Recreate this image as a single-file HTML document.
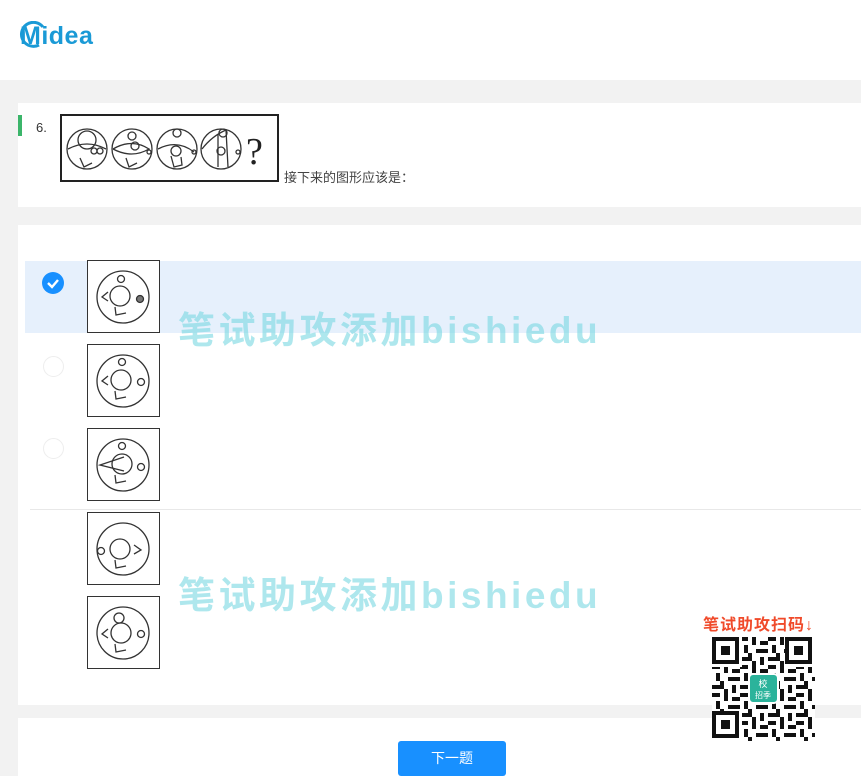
<!DOCTYPE html>
<html><head><meta charset="utf-8"><style>
*{margin:0;padding:0;box-sizing:border-box}
body{width:861px;height:776px;background:#f2f2f2;font-family:"Liberation Sans","Noto Sans CJK SC",sans-serif;position:relative;overflow:hidden}
.hdr{position:absolute;left:0;top:0;width:861px;height:80px;background:#fff}
.logo{position:absolute;left:20px;top:22px;font-size:25px;font-weight:bold;color:#1a9ad6;letter-spacing:0.5px}
.card{position:absolute;background:#fff}
.bar{position:absolute;left:18px;top:115px;width:4px;height:21px;background:#3bb56a}
.box{position:absolute;width:73px;height:73px;border:1.5px solid #333;background:#fff}
.radio{position:absolute;left:43px;width:21px;height:21px;border-radius:50%;border:1px solid #ddd;background:#fff}
.wm{position:absolute;font-size:37px;font-weight:bold;color:rgba(120,215,225,0.6);letter-spacing:3.5px}
</style></head><body>
<div class="hdr"><div class="logo">Midea</div>
<svg style="position:absolute;left:17px;top:21px" width="30" height="28"><path d="M26 6 A12 12 0 1 0 22 24" fill="none" stroke="#1a9ad6" stroke-width="3"/></svg></div>
<div class="card" style="left:18px;top:103px;width:843px;height:104px"></div>
<div class="bar"></div>
<div style="position:absolute;left:36px;top:120px;font-size:13px;color:#333">6.</div>
<svg style="position:absolute;left:60px;top:114px" width="220" height="69">
<rect x="1" y="1" width="217" height="66" fill="#fff" stroke="#222" stroke-width="2"/>
<g fill="none" stroke="#333" stroke-width="1.3">
<circle cx="27" cy="35" r="20"/><circle cx="27" cy="26" r="9"/><path d="M8 35 Q27 25 46 35"/><circle cx="34" cy="37" r="3"/><circle cx="40" cy="37" r="3"/><path d="M20 44 l4 9 l8 -4"/>
<circle cx="72" cy="35" r="20"/><circle cx="72" cy="22" r="4"/><path d="M53 35 Q72 24 89 35 Q72 45 53 35"/><circle cx="75" cy="32" r="4"/><circle cx="89" cy="38" r="2"/><path d="M66 44 l3 9 l8 -4"/>
<circle cx="117" cy="35" r="20"/><circle cx="117" cy="19" r="4"/><path d="M98 35 Q117 25 134 38"/><circle cx="116" cy="37" r="5"/><circle cx="134" cy="38" r="2"/><path d="M111 42 l3 11 l8 -2 l-1 -8"/>
<circle cx="161" cy="35" r="20"/><circle cx="163" cy="19" r="4"/><path d="M142 35 Q152 22 166 16 L168 53"/><circle cx="161" cy="37" r="4"/><circle cx="178" cy="38" r="2"/><path d="M158 20 L158 53"/>
</g>
<text x="186" y="50" font-size="38" font-family="Liberation Serif" fill="#222">?</text>
</svg>
<div style="position:absolute;left:284px;top:167px;font-size:13px;color:#444">接下来的图形应该是：</div>
<div class="card" style="left:18px;top:225px;width:843px;height:480px"></div>
<div style="position:absolute;left:25px;top:261px;width:836px;height:72px;background:#e6f0fc"></div>
<div style="position:absolute;left:30px;top:509px;width:831px;height:1px;background:#e8e8e8"></div>
<div style="position:absolute;left:42px;top:272px;width:22px;height:22px;border-radius:50%;background:#1890ff"><svg width="22" height="22"><path d="M6 11 l4 4 l6 -7" fill="none" stroke="#fff" stroke-width="2.4"/></svg></div>
<div class="radio" style="top:356px;opacity:.5"></div>
<div class="radio" style="top:438px;opacity:.5"></div>

<div class="box" style="left:87px;top:260px"><svg width="70" height="70"><g fill="none" stroke="#333" stroke-width="1.3"><circle cx="35" cy="36" r="26"/><circle cx="32" cy="35" r="10"/><circle cx="33" cy="18" r="3.5"/><circle cx="52" cy="38" r="3.5" fill="#777"/><path d="M20 31 l-6 5 l6 4"/><path d="M27 46 l1 8 l10 -2"/></g></svg></div>
<div class="box" style="left:87px;top:344px"><svg width="70" height="70"><g fill="none" stroke="#333" stroke-width="1.3"><circle cx="35" cy="36" r="26"/><circle cx="33" cy="35" r="10"/><circle cx="34" cy="17" r="3.5"/><circle cx="53" cy="37" r="3.5"/><path d="M20 31 l-6 5 l6 4"/><path d="M27 46 l1 8 l10 -2"/></g></svg></div>
<div class="box" style="left:87px;top:428px"><svg width="70" height="70"><g fill="none" stroke="#333" stroke-width="1.3"><circle cx="35" cy="36" r="26"/><circle cx="34" cy="35" r="10"/><circle cx="34" cy="17" r="3.5"/><circle cx="53" cy="38" r="3.5"/><path d="M36 28 L12 36 L36 42"/><path d="M27 46 l1 8 l10 -2"/></g></svg></div>
<div class="box" style="left:87px;top:512px"><svg width="70" height="70"><g fill="none" stroke="#333" stroke-width="1.3"><circle cx="35" cy="36" r="26"/><circle cx="32" cy="36" r="10"/><circle cx="13" cy="38" r="3.5"/><path d="M46 32 l7 5 l-7 4"/><path d="M27 47 l1 8 l10 -2"/></g></svg></div>
<div class="box" style="left:87px;top:596px"><svg width="70" height="70"><g fill="none" stroke="#333" stroke-width="1.3"><circle cx="35" cy="36" r="26"/><circle cx="33" cy="36" r="10"/><circle cx="31" cy="21" r="5"/><circle cx="53" cy="37" r="3.5"/><path d="M20 32 l-6 5 l6 4"/><path d="M27 47 l1 8 l10 -2"/></g></svg></div>

<div class="wm" style="left:178px;top:300px">笔试助攻添加bishiedu</div>
<div class="wm" style="left:178px;top:565px">笔试助攻添加bishiedu</div>

<div class="card" style="left:18px;top:718px;width:843px;height:58px"></div>
<div style="position:absolute;left:398px;top:741px;width:108px;height:35px;background:#1890ff;border-radius:3px;color:#fff;font-size:14px;text-align:center;line-height:35px">下一题</div>

<div style="position:absolute;left:703px;top:611px;font-size:16px;font-weight:bold;color:#f04a2a;letter-spacing:1px">笔试助攻扫码↓</div>
<svg style="position:absolute;left:712px;top:637px" width="103" height="104">
<defs><pattern id="q" width="28" height="28" patternUnits="userSpaceOnUse">
<rect width="28" height="28" fill="#fff"/>
<g fill="#111"><rect x="0" y="0" width="8" height="4"/><rect x="12" y="0" width="4" height="8"/><rect x="20" y="4" width="8" height="4"/><rect x="4" y="8" width="4" height="8"/><rect x="16" y="12" width="8" height="4"/><rect x="0" y="20" width="12" height="4"/><rect x="20" y="20" width="4" height="8"/><rect x="8" y="16" width="4" height="4"/><rect x="12" y="24" width="4" height="4"/><rect x="24" y="12" width="4" height="4"/></g></pattern></defs>
<rect width="103" height="104" fill="url(#q)"/>
<g fill="#fff"><rect x="0" y="0" width="30" height="30"/><rect x="73" y="0" width="30" height="30"/><rect x="0" y="74" width="30" height="30"/></g>
<g fill="none" stroke="#111" stroke-width="4"><rect x="2" y="2" width="23" height="23"/><rect x="75" y="2" width="23" height="23"/><rect x="2" y="76" width="23" height="23"/></g>
<g fill="#111"><rect x="9" y="9" width="9" height="9"/><rect x="82" y="9" width="9" height="9"/><rect x="9" y="83" width="9" height="9"/></g>
<rect x="37" y="37" width="29" height="29" rx="4" fill="#2bb39b" stroke="#fff" stroke-width="2"/>
<text x="51" y="50" font-size="9" fill="#fff" text-anchor="middle" font-family="Noto Sans CJK SC">校</text>
<text x="51" y="61" font-size="8" fill="#fff" text-anchor="middle" font-family="Noto Sans CJK SC">招季</text>
</svg>
</body></html>
